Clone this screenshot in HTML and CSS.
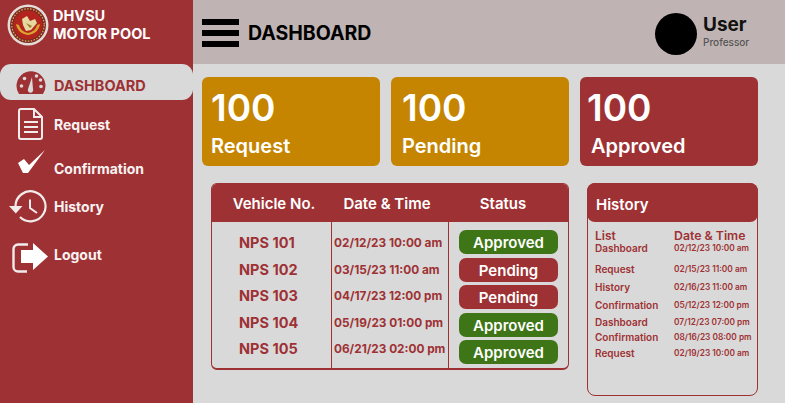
FILE: index.html
```html
<!DOCTYPE html>
<html lang="en">
<head>
  <meta charset="UTF-8" />
  <meta name="viewport" content="width=device-width, initial-scale=1.0"/>
  <title>DHVSU Motor Pool</title>
  <link rel="stylesheet" href="styles.css">
</head>
<body>

  <div class="page">
    <aside class="sidebar">
      <div class="brand">
        <svg class="logo" viewBox="0 0 42 42" width="42" height="42">
          <circle cx="21" cy="21" r="20.5" fill="#e4dcd6"/>
          <circle cx="21" cy="21" r="18" fill="#7e2a24"/>
          <circle cx="21" cy="21" r="14.5" fill="#b3241f"/>
          <circle cx="21" cy="21" r="16.2" fill="none" stroke="#d8b65a" stroke-width="1.2" stroke-dasharray="1.5 1.5"/>
          <path d="M9 20c1 6 5 10 12 11c7-1 11-5 12-11l-3 1c-1 4-4 7-9 8c-5-1-8-4-9-8z" fill="#d9a52e"/>
          <path d="M15 15l5-3l3 5l5-2l2 4l-6 7l-5 1l-3-6z" fill="#e6d9a0"/>
          <path d="M19 19l4 5l2-2z" fill="#9c7a2b"/>
        </svg>
        <div class="brand-name">DHVSU<br>MOTOR POOL</div>
      </div>

      <nav class="nav">
        <a class="nav-item active">
          <svg class="nav-icon" viewBox="0 0 30 24" width="30" height="24">
            <path d="M3 23a14.5 14.5 0 1 1 24 0z" fill="#9e3134"/>
            <circle cx="5.5" cy="15" r="1.8" fill="#d9d9d9"/>
            <circle cx="8.5" cy="7.5" r="1.8" fill="#d9d9d9"/>
            <circle cx="20.5" cy="5" r="1.8" fill="#d9d9d9"/>
            <circle cx="24.5" cy="9" r="1.8" fill="#d9d9d9"/>
            <circle cx="25" cy="15.5" r="1.8" fill="#d9d9d9"/>
            <path d="M16 6l1 12a2.7 2.7 0 1 1-5 0z" fill="#d9d9d9"/>
          </svg>
          <span>DASHBOARD</span>
        </a>
        <a class="nav-item request">
          <svg class="nav-icon" viewBox="0 0 30 34" width="30" height="34">
            <path d="M5 2h13l8 8v20a2 2 0 0 1-2 2H5a2 2 0 0 1-2-2V4a2 2 0 0 1 2-2z" fill="none" stroke="#f3ecec" stroke-width="2"/>
            <path d="M18 2v8h8" fill="none" stroke="#f3ecec" stroke-width="2"/>
            <path d="M8 15h14M8 20h14M8 25h14" stroke="#f3ecec" stroke-width="2"/>
          </svg>
          <span>Request</span>
        </a>
        <a class="nav-item confirm">
          <svg class="nav-icon" viewBox="0 0 27 24" width="27" height="24">
            <path d="M0 13l6-4l5 6L27 0L10 23H5z" fill="#fff"/>
          </svg>
          <span>Confirmation</span>
        </a>
        <a class="nav-item history">
          <svg class="nav-icon" viewBox="0 0 41 34" width="41" height="34">
            <path d="M6.5 16a15 15 0 1 1 4.5 11" fill="none" stroke="#f3ecec" stroke-width="2.2"/>
            <path d="M0 16h13.5l-6.7 7.5z" fill="#f3ecec"/>
            <path d="M21 9.5v8.5l7 5" fill="none" stroke="#f3ecec" stroke-width="2"/>
          </svg>
          <span>History</span>
        </a>
        <a class="nav-item logout">
          <svg class="nav-icon" viewBox="0 0 37 30" width="37" height="30">
            <path d="M16 1.5H6a4.5 4.5 0 0 0-4.5 4.5v18a4.5 4.5 0 0 0 4.5 4.5h9" fill="none" stroke="#f3ecec" stroke-width="2.4"/>
            <path d="M9 7h12V0l15 13.5L21 27v-7H9z" fill="#fff"/>
          </svg>
          <span>Logout</span>
        </a>
      </nav>
    </aside>

    <div class="main">
      <header class="topbar">
        <div class="burger"><i></i><i></i><i></i></div>
        <h1>DASHBOARD</h1>
        <div class="user">
          <div class="avatar"></div>
          <div class="user-text">
            <div class="user-name">User</div>
            <div class="user-role">Professor</div>
          </div>
        </div>
      </header>

      <section class="cards">
        <div class="card amber"><div class="num">100</div><div class="label">Request</div></div>
        <div class="card amber pending"><div class="num">100</div><div class="label">Pending</div></div>
        <div class="card red"><div class="num">100</div><div class="label">Approved</div></div>
      </section>

      <section class="lower">
        <div class="vehicles">
          <div class="vehicles-head">
            <div>Vehicle No.</div>
            <div>Date &amp; Time</div>
            <div>Status</div>
          </div>
          <div class="vehicles-body">
            <div class="col col-no">
              <div>NPS 101</div><div>NPS 102</div><div>NPS 103</div><div>NPS 104</div><div>NPS 105</div>
            </div>
            <div class="col col-date">
              <div>02/12/23 10:00 am</div><div>03/15/23 11:00 am</div><div>04/17/23 12:00 pm</div><div>05/19/23 01:00 pm</div><div>06/21/23 02:00 pm</div>
            </div>
            <div class="col col-status">
              <div class="pill green">Approved</div>
              <div class="pill maroon">Pending</div>
              <div class="pill maroon">Pending</div>
              <div class="pill green">Approved</div>
              <div class="pill green">Approved</div>
            </div>
          </div>
        </div>

        <div class="history-box">
          <div class="history-head">History</div>
          <div class="history-list">
            <div class="h-title">List</div><div class="h-title h-date-title">Date &amp; Time</div>
            <div>Dashboard</div><div class="h-date">02/12/23 10:00 am</div>
            <div>Request</div><div class="h-date">02/15/23 11:00 am</div>
            <div>History</div><div class="h-date">02/16/23 11:00 am</div>
            <div>Confirmation</div><div class="h-date">05/12/23 12:00 pm</div>
            <div>Dashboard</div><div class="h-date">07/12/23 07:00 pm</div>
            <div>Confirmation</div><div class="h-date">08/16/23 08:00 pm</div>
            <div>Request</div><div class="h-date">02/19/23 10:00 am</div>
          </div>
        </div>
      </section>
    </div>
  </div>

</body>
</html>
```

FILE: styles.css
```css
* {
  box-sizing: border-box;
}
html, body {
  margin: 0;
  height: 100%;
  overflow: hidden;
}
body {
  font-family: 'Inter', 'Liberation Sans', sans-serif;
  background: #d9d9d9;
}
.page {
  display: flex;
  width: 785px;
  height: 403px;
}

/* sidebar */
.sidebar {
  width: 193px;
  background: #9e3134;
  color: #fff;
  flex-shrink: 0;
}
.brand {
  display: flex;
  align-items: flex-start;
  gap: 4px;
  padding: 4px 0 0 7px;
  height: 64px;
}
.brand-name {
  font-size: 14.5px;
  font-weight: 700;
  line-height: 18px;
  margin-top: 3px;
}
.nav-item {
  display: flex;
  align-items: center;
  font-size: 14px;
  font-weight: 700;
  color: #f8f2f2;
}
.active {
  height: 36px;
  background: #d9d9d9;
  color: #9e3134;
  border-radius: 11px;
  padding: 6px 0 0 16px;
  gap: 8px;
  font-size: 14.5px;
}
.active svg {
  margin-top: -5px;
}
.request {
  height: 34px;
  margin-top: 7px;
  padding-left: 16px;
  gap: 8px;
}
.confirm {
  height: 28px;
  margin-top: 9px;
  padding-left: 18px;
  gap: 9px;
}
.confirm svg {
  align-self: flex-start;
}
.confirm span {
  align-self: flex-end;
  line-height: 18px;
}
.history {
  height: 34px;
  margin-top: 12px;
  padding-left: 9px;
  gap: 4px;
}
.history span {
  margin-bottom: 2px;
}
.logout {
  height: 30px;
  margin-top: 19px;
  padding-left: 12px;
  gap: 5px;
}
.logout span {
  margin-bottom: 8px;
}

/* main */
.main {
  flex: 1;
  min-width: 0;
}
.topbar {
  display: flex;
  align-items: center;
  height: 64px;
  background: #bfb4b3;
  padding-left: 9px;
}
.burger {
  display: flex;
  flex-direction: column;
  gap: 5px;
  width: 37px;
  margin-top: 2px;
}
.burger i {
  display: block;
  height: 6px;
  background: #000;
}
.topbar h1 {
  margin: 2px 0 0 9px;
  font-size: 19.5px;
  font-weight: 700;
  color: #000;
}
.user {
  display: flex;
  align-items: center;
  margin-left: auto;
  margin-right: 34px;
  width: 96px;
}
.avatar {
  width: 42px;
  height: 42px;
  border-radius: 50%;
  background: #000;
  margin-top: 4px;
  flex-shrink: 0;
}
.user-text {
  margin-left: 6px;
}
.user-name {
  font-size: 19px;
  font-weight: 700;
  line-height: 20px;
  color: #111;
}
.user-role {
  font-size: 10px;
  font-weight: 500;
  color: #555;
  line-height: 14px;
}

.cards {
  display: flex;
  gap: 11px;
  padding: 13px 0 0 9px;
}
.card {
  width: 178px;
  height: 89px;
  border-radius: 6px;
  color: #fff;
  padding: 9px;
}
.amber {
  background: #c58500;
}
.pending {
  padding-left: 11px;
}
.red {
  background: #9e3134;
  padding-left: 7px;
}
.red .label {
  margin-left: 4px;
}
.num {
  font-size: 37px;
  font-weight: 600;
  line-height: 44px;
}
.label {
  font-size: 20px;
  font-weight: 600;
  line-height: 24px;
  margin-top: 4px;
}

.lower {
  display: flex;
  align-items: flex-start;
  gap: 18px;
  padding: 17px 0 0 18px;
}
.vehicles {
  width: 358px;
  height: 187px;
  border: 1px solid #9e3134;
  border-bottom-width: 2px;
  border-radius: 6px;
  overflow: hidden;
}
.vehicles-head {
  display: grid;
  grid-template-columns: 124px 102px 1fr;
  height: 38px;
  align-items: center;
  text-align: center;
  background: #9e3134;
  color: #fff;
  font-size: 15px;
  font-weight: 600;
}
.vehicles-body {
  display: grid;
  grid-template-columns: 119px 118px 1fr;
  height: 146px;
}
.col {
  color: #9e3134;
  font-weight: 700;
}
.col-no {
  padding: 8px 0 0 27px;
  font-size: 14.5px;
}
.col-no div, .col-date div {
  height: 26.5px;
  line-height: 26px;
}
.col-date {
  border-left: 1px solid #9e3134;
  border-right: 1px solid #9e3134;
  padding: 8px 0 0 2px;
  font-size: 11.8px;
  white-space: nowrap;
}
.col-status {
  padding: 8px 0 0 10px;
}
.pill {
  width: 99px;
  height: 24px;
  border-radius: 7px;
  color: #fff;
  text-align: center;
  font-size: 15px;
  font-weight: 600;
  line-height: 25px;
  margin-bottom: 3.5px;
}
.green {
  background: #3e7516;
}
.maroon {
  background: #9e3134;
}

.history-box {
  width: 171px;
  height: 213px;
  border: 1px solid #9e3134;
  border-radius: 8px;
}
.history-head {
  height: 39px;
  margin: -1px -1px 0;
  background: #9e3134;
  color: #fff;
  border-radius: 8px;
  font-size: 15px;
  font-weight: 600;
  line-height: 44px;
  padding-left: 9px;
}
.history-list {
  display: grid;
  grid-template-columns: 79px 1fr;
  grid-template-rows: 13px 21px 18px 18px 17px 15px 16px 16px;
  padding: 7px 0 0 7px;
  color: #9e3134;
  font-size: 10px;
  font-weight: 600;
  line-height: 13px;
  white-space: nowrap;
}
.h-title {
  font-size: 12px;
}
.h-date-title {
  font-size: 12.3px;
}
.h-date {
  font-size: 8.3px;
}
```
